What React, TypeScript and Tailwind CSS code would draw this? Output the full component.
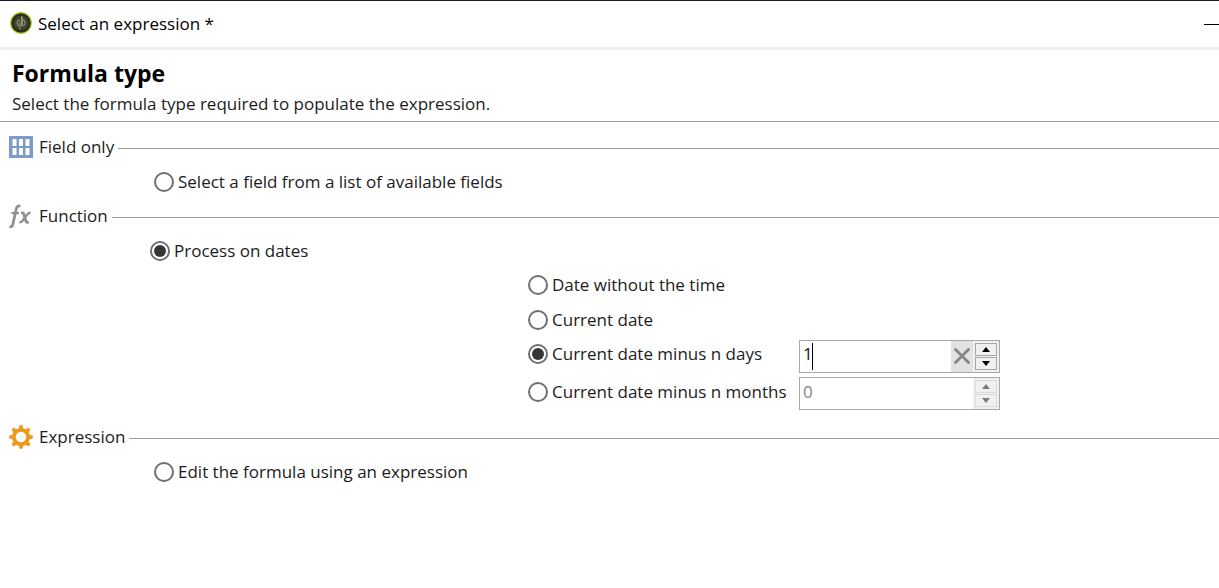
import { useState } from 'react';
import type { ReactNode } from 'react';
import clsx from 'clsx';

type DateOption = 'noTime' | 'current' | 'minusDays' | 'minusMonths';
type FormulaType = 'field' | 'dates' | 'expression';

function LogoIcon() {
  return (
    <svg className="w-6 h-6 shrink-0" viewBox="0 0 24 24" fill="none">
      <circle cx="12" cy="11" r="10.4" fill="#2c3119" stroke="#b4cf3c" strokeWidth="1.2" />
      <circle cx="12" cy="11" r="7.2" fill="#3f442b" />
      <path d="M12.9 4.4v9.4" stroke="#a9ab96" strokeWidth="1.5" />
      <path d="M11 7.9c-1.8.2-2.8 1.4-2.8 3.1s1 2.8 2.8 2.9" stroke="#85886f" strokeWidth="1.3" />
      <path d="M10.9 10v7.4" stroke="#85886f" strokeWidth="1.3" />
      <path d="M13.4 7.9c1.8.2 2.8 1.4 2.8 3.1s-1 2.8-3.3 2.9" stroke="#85886f" strokeWidth="1.2" />
    </svg>
  );
}

function GridIcon() {
  return (
    <svg className="w-6 h-6 shrink-0" viewBox="0 0 24 24">
      <rect y="1" width="24" height="22" fill="#7c9bc8" />
      <g fill="#fff">
        <rect x="3.5" y="4" width="4" height="7" />
        <rect x="10" y="4" width="4" height="7" />
        <rect x="16.5" y="4" width="4" height="7" />
        <rect x="3.5" y="13" width="4" height="7" />
        <rect x="10" y="13" width="4" height="7" />
        <rect x="16.5" y="13" width="4" height="7" />
      </g>
    </svg>
  );
}

function FunctionIcon() {
  return (
    <svg className="w-6 h-6 shrink-0" viewBox="0 0 24 24" fill="none" stroke="#919191" strokeWidth="2.8">
      <path d="M11.4 2.2C8.8 1.3 7.8 2.6 7.2 5L4 19.8C3.6 22 2.6 23.2.5 22.5" />
      <path d="M2.4 9h7.6" strokeWidth="2.2" />
      <path d="M12 9c1.8-.6 2.6.1 3.1 1.8l1.5 5.6c.5 1.8 1.5 2.3 3.2 1.6" />
      <path d="M21.6 8.9c-1.8-.3-2.8.7-4 2.4l-3.5 4.8c-1.1 1.6-2 2.4-3.7 2" strokeWidth="2.5" />
    </svg>
  );
}

function GearIcon() {
  const teeth = [0, 45, 90, 135, 180, 225, 270, 315];
  return (
    <svg className="w-6 h-6 shrink-0" viewBox="0 0 24 24">
      <circle cx="12" cy="12" r="7.2" fill="none" stroke="#ec9a1c" strokeWidth="3.8" />
      {teeth.map((angle) => (
        <path key={angle} d="M9.6 5 10.4.2h3.2l.8 4.8z" fill="#ec9a1c" transform={`rotate(${angle} 12 12)`} />
      ))}
    </svg>
  );
}

function Section({ icon, title, className, children }: { icon: ReactNode; title: string; className?: string; children: ReactNode }) {
  return (
    <section className={className}>
      <div className="flex items-center h-[34px] pl-[9px]">
        {icon}
        <h2 className="ml-1.5 mr-1">{title}</h2>
        <div className="flex-1 h-px mt-[3px] bg-[#9d9d9d]" />
      </div>
      {children}
    </section>
  );
}

interface RadioProps {
  name: string;
  label: string;
  checked: boolean;
  onChange: () => void;
}

function Radio({ name, label, checked, onChange }: RadioProps) {
  return (
    <label className="flex items-center gap-1 whitespace-nowrap">
      <span className="grid place-items-center">
        <input
          type="radio"
          name={name}
          checked={checked}
          onChange={onChange}
          className="col-start-1 row-start-1 appearance-none w-5 h-5 rounded-full border-2 border-[#707070] bg-white"
        />
        {checked && <span className="col-start-1 row-start-1 w-3 h-3 rounded-full bg-[#363636] pointer-events-none" />}
      </span>
      {label}
    </label>
  );
}

interface SpinnerProps {
  label: string;
  value: number;
  disabled: boolean;
  onChange: (value: number) => void;
}

function Spinner({ label, value, disabled, onChange }: SpinnerProps) {
  const buttonClass = clsx(
    'flex-1 flex items-center justify-center border bg-[#f0f0f0]',
    disabled ? 'border-[#dadada] text-[#7b7b7b]' : 'border-[#a6a6a6] text-black'
  );

  return (
    <div className="relative flex w-[201px] h-[33px] border border-[#a8a8ac] bg-white">
      <input
        type="text"
        aria-label={label}
        value={value}
        disabled={disabled}
        onChange={(e) => onChange(Number(e.target.value) || 0)}
        className="flex-1 min-w-0 pl-[3px] pb-1 outline-none caret-transparent text-[#202020] disabled:text-[#838383]"
      />
      {!disabled && (
        <>
          <span className="absolute left-3 top-0.5 w-px h-[27px] bg-black" />
          <button aria-label="Clear" onClick={() => onChange(0)} className="w-[22px] flex items-center justify-center bg-[#e2e2e2]">
            <svg className="w-4 h-4" viewBox="0 0 16 16" stroke="#858585" strokeWidth="2.8" strokeLinecap="round">
              <path d="M1.5 1.5l13 13M14.5 1.5l-13 13" />
            </svg>
          </button>
        </>
      )}
      <div className="flex flex-col gap-px w-[26px] p-0.5 bg-[#f0f0f0]">
        <button aria-label="Increase" disabled={disabled} onClick={() => onChange(value + 1)} className={buttonClass}>
          <svg className="w-2 h-[5px]" viewBox="0 0 8 5" fill="currentColor"><path d="M0 5 4 0l4 5z" /></svg>
        </button>
        <button aria-label="Decrease" disabled={disabled} onClick={() => onChange(value - 1)} className={buttonClass}>
          <svg className="w-2 h-[5px]" viewBox="0 0 8 5" fill="currentColor"><path d="M0 0h8L4 5z" /></svg>
        </button>
      </div>
    </div>
  );
}

export default function App() {
  const [formula, setFormula] = useState<FormulaType>('dates');
  const [option, setOption] = useState<DateOption>('minusDays');
  const [days, setDays] = useState(1);
  const [months, setMonths] = useState(0);

  return (
    <div className="min-h-screen overflow-hidden bg-white border-t border-[#1b1b1f] text-[#1c1c20] text-[17px] leading-6 font-['Open_Sans','Noto_Sans',sans-serif]">
      {/* Title bar */}
      <header className="flex items-center h-[49px] pl-[9px] border-b-3 border-[#f0f0f0] text-black">
        <LogoIcon />
        <h1 className="ml-[5px]">Select an expression *</h1>
        <button aria-label="Minimize" className="ml-auto w-[15px] h-6 flex items-center">
          <span className="w-full h-px bg-black" />
        </button>
      </header>

      <div className="h-[72px] pl-3 pt-2 border-b border-[#9d9d9d]">
        <p className="text-[23px] leading-[30px] font-bold text-black">Formula type</p>
        <p className="mt-1">Select the formula type required to populate the expression.</p>
      </div>

      <main className="pt-2">
        <Section icon={<GridIcon />} title="Field only">
          <div className="flex items-center h-[35px] pl-[154px]">
            <Radio name="formula" label="Select a field from a list of available fields" checked={formula === 'field'} onChange={() => setFormula('field')} />
          </div>
        </Section>

        <Section icon={<FunctionIcon />} title="Function">
          <div className="flex items-center h-[35px] pl-[150px]">
            <Radio name="formula" label="Process on dates" checked={formula === 'dates'} onChange={() => setFormula('dates')} />
          </div>
          <div className="grid grid-cols-[271px_201px] grid-rows-[34px_35px_38px_37px] items-center pl-[528px]">
            <div className="col-span-2">
              <Radio name="date" label="Date without the time" checked={option === 'noTime'} onChange={() => setOption('noTime')} />
            </div>
            <div className="col-span-2">
              <Radio name="date" label="Current date" checked={option === 'current'} onChange={() => setOption('current')} />
            </div>
            <div className="pb-1">
              <Radio name="date" label="Current date minus n days" checked={option === 'minusDays'} onChange={() => setOption('minusDays')} />
            </div>
            <Spinner label="Number of days" value={days} disabled={option !== 'minusDays'} onChange={setDays} />
            <div className="pb-1">
              <Radio name="date" label="Current date minus n months" checked={option === 'minusMonths'} onChange={() => setOption('minusMonths')} />
            </div>
            <Spinner label="Number of months" value={months} disabled={option !== 'minusMonths'} onChange={setMonths} />
          </div>
        </Section>

        <Section icon={<GearIcon />} title="Expression" className="mt-2">
          <div className="flex items-center h-[35px] pl-[154px]">
            <Radio name="formula" label="Edit the formula using an expression" checked={formula === 'expression'} onChange={() => setFormula('expression')} />
          </div>
        </Section>
      </main>
    </div>
  );
}
